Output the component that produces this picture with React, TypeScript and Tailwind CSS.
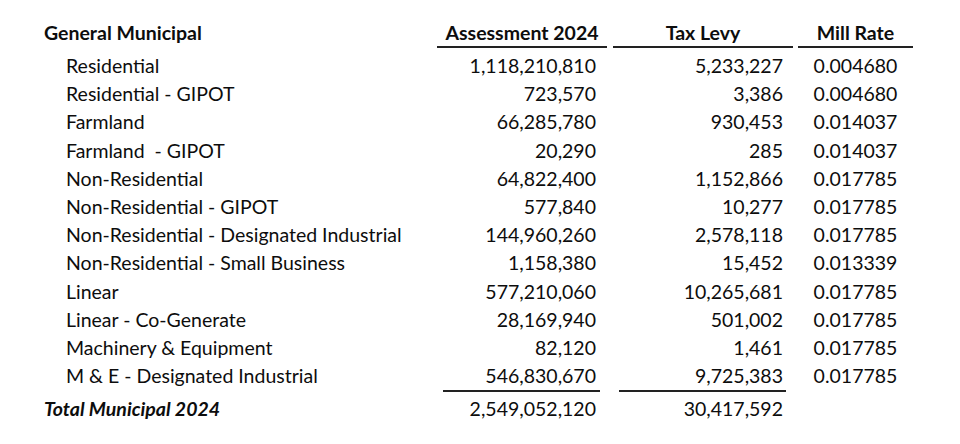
const rows = [
  ["Residential", "1,118,210,810", "5,233,227", "0.004680"],
  ["Residential - GIPOT", "723,570", "3,386", "0.004680"],
  ["Farmland", "66,285,780", "930,453", "0.014037"],
  ["Farmland  - GIPOT", "20,290", "285", "0.014037"],
  ["Non-Residential", "64,822,400", "1,152,866", "0.017785"],
  ["Non-Residential - GIPOT", "577,840", "10,277", "0.017785"],
  ["Non-Residential - Designated Industrial", "144,960,260", "2,578,118", "0.017785"],
  ["Non-Residential - Small Business", "1,158,380", "15,452", "0.013339"],
  ["Linear", "577,210,060", "10,265,681", "0.017785"],
  ["Linear - Co-Generate", "28,169,940", "501,002", "0.017785"],
  ["Machinery & Equipment", "82,120", "1,461", "0.017785"],
  ["M & E - Designated Industrial", "546,830,670", "9,725,383", "0.017785"],
];

export default function App() {
  return (
    <div className="w-[960px] h-[444px] bg-white text-[#0d0d0d] pl-[44px] pt-[20px] text-[19.5px] font-['Lato',sans-serif]">
      {/* header */}
      <div className="flex h-[28px] font-bold">
        <div className="w-[393px] leading-[26px]">General Municipal</div>
        <div className="w-[170px] text-center leading-[26px] border-b-2 border-[#222]">Assessment 2024</div>
        <div className="w-[6px]" />
        <div className="w-[180px] text-center leading-[26px] border-b-2 border-[#222]">Tax Levy</div>
        <div className="w-[5px]" />
        <div className="w-[115px] text-center leading-[26px] border-b-2 border-[#222]">Mill Rate</div>
      </div>

      <div className="mt-[4px]">
        {rows.map(([label, assess, levy, rate]) => (
          <div key={label} className="flex h-[28.2px] leading-[28px]">
            <div className="w-[393px] pl-[22px] whitespace-pre">{label}</div>
            <div className="w-[170px] text-right pr-[11px]">{assess}</div>
            <div className="w-[6px]" />
            <div className="w-[180px] text-right pr-[10px]">{levy}</div>
            <div className="w-[5px]" />
            <div className="w-[115px] text-center">{rate}</div>
          </div>
        ))}
      </div>

      {/* total underline */}
      <div className="flex h-[2px]">
        <div className="w-[399px]" />
        <div className="w-[157px] bg-[#222]" />
        <div className="w-[19px]" />
        <div className="w-[167px] bg-[#222]" />
      </div>

      <div className="flex h-[28px] leading-[30px] mt-[2px]">
        <div className="w-[393px] font-bold italic">Total Municipal 2024</div>
        <div className="w-[170px] text-right pr-[11px]">2,549,052,120</div>
        <div className="w-[6px]" />
        <div className="w-[180px] text-right pr-[10px]">30,417,592</div>
      </div>
    </div>
  );
}
